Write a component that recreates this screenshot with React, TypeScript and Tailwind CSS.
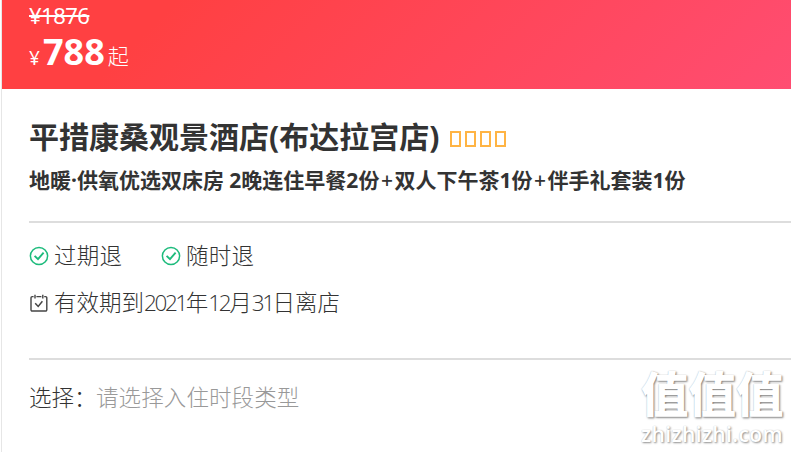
import type { ReactNode } from 'react';

const guarantees = ['过期退', '随时退'];

function CheckCircle() {
  return (
    <svg viewBox="0 0 20 20" className="h-5 w-5 shrink-0" fill="none" stroke="#1dbb7c" strokeWidth="1.5">
      <circle cx="10" cy="10" r="8.6" />
      <path d="M5.6 9.8 9 13.2 14.6 6.6" strokeWidth="1.9" />
    </svg>
  );
}

function CalendarCheck() {
  return (
    <svg viewBox="0 0 20 20" className="h-5 w-5 shrink-0" fill="none" stroke="#444" strokeWidth="1.4">
      <path d="M4.6 3.6H3.2a1.2 1.2 0 0 0-1.2 1.2v12a1.2 1.2 0 0 0 1.2 1.2h13.4a1.2 1.2 0 0 0 1.2-1.2v-12a1.2 1.2 0 0 0-1.2-1.2h-1.4M7.4 3.6h5" />
      <path d="M6 1.8v3.6M13.8 1.8v3.6" />
      <path d="M6.2 10.2 9.2 13.4 13.4 8.2" strokeWidth="1.5" />
    </svg>
  );
}

function Latin({ children }: { children: ReactNode }) {
  return <span className="font-['Open_Sans','Noto_Sans',sans-serif] tracking-[-2.4px]">{children}</span>;
}

function Plus() {
  return <span className="inline-block w-[15px] text-center font-medium">+</span>;
}

export default function App() {
  return (
    <div className="relative h-[452px] w-[791px] overflow-hidden bg-white pl-px font-['Noto_Sans','Noto_Sans_CJK_SC',sans-serif] text-[#333]">
      <div className="h-full border-l border-[#e6e6e6]">
        {/* Prix */}
        <header className="h-[89px] bg-linear-[135deg,#ff4042_0%,#ff4042_20%,#ff4d72_100%] pl-[27px] text-white">
          <div className="h-[31px] text-[22px] leading-[31px] tracking-[-0.5px] line-through">¥1876</div>
          <div className="flex h-10 items-baseline leading-10">
            <span className="w-[14px] text-[19px]">¥</span>
            <span className="font-['Open_Sans',sans-serif] text-[36px] leading-[42px] font-bold">788</span>
            <span className="relative -top-px ml-[3px] text-[21px] font-light">起</span>
          </div>
        </header>

        <main className="pl-[27px]">
          <h1 className="mt-[28px] flex h-10 items-center text-[30px] leading-10 font-bold">
            平措康桑观景酒店(布达拉宫店)
            <span className="mt-1 ml-[11px] flex gap-1">
              {[0, 1, 2, 3].map((i) => (
                <i key={i} className="h-4 w-[11px] border-2 border-[#ffb444]" />
              ))}
            </span>
          </h1>
          <p className="mt-[7px] h-[33px] text-[21px] leading-8 font-bold whitespace-nowrap">
            地暖·供氧优选双床房 2晚连住早餐2份
            <Plus />
            双人下午茶1份
            <Plus />
            伴手礼套装1份
          </p>

          <div className="mt-6 h-[139px] border-y-2 border-[#ddd] text-[22.5px] font-light">
            <div className="mt-[15px] flex h-9 items-center gap-[38px]">
              {guarantees.map((name) => (
                <div key={name} className="flex items-center gap-[5px]">
                  <CheckCircle />
                  <span className="w-[69px] tracking-[0.3px]">{name}</span>
                </div>
              ))}
            </div>
            <div className="mt-[11px] flex h-9 items-center gap-[5px]">
              <CalendarCheck />
              <span>
                有效期到<Latin>2021</Latin>年<Latin>12</Latin>月<Latin>31</Latin>日离店
              </span>
            </div>
          </div>

          <div className="mt-5 flex h-9 items-center text-[22.5px] font-light whitespace-nowrap">
            <span className="w-[67px]">选择：</span>
            <span className="tracking-[0.1px] text-[#999]">请选择入住时段类型</span>
          </div>
        </main>
      </div>

      {/* Filigrane */}
      <div className="absolute top-[366px] left-[641px] text-white opacity-95">
        <div className="h-14 text-[47.5px] leading-[56px] font-black whitespace-nowrap [text-shadow:1px_1px_2px_#777,0_0_1px_#bbb]">
          值值值
        </div>
        <div className="h-6 font-['Open_Sans',sans-serif] text-[21px] leading-[24px] font-semibold tracking-[0.4px] [text-shadow:1px_1px_2px_#888,0_0_1px_#ccc]">
          zhizhizhi.com
        </div>
      </div>
    </div>
  );
}
